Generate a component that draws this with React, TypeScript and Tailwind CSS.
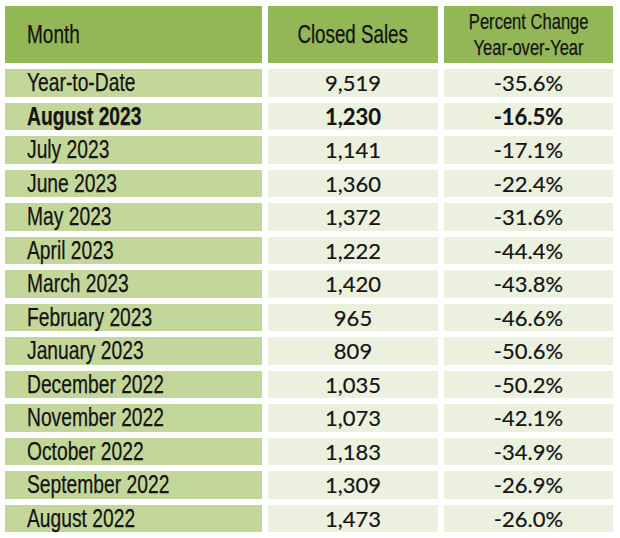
import React from "react";

const rows: [string, string, string, boolean?][] = [
  ["Year-to-Date", "9,519", "-35.6%"],
  ["August 2023", "1,230", "-16.5%", true],
  ["July 2023", "1,141", "-17.1%"],
  ["June 2023", "1,360", "-22.4%"],
  ["May 2023", "1,372", "-31.6%"],
  ["April 2023", "1,222", "-44.4%"],
  ["March 2023", "1,420", "-43.8%"],
  ["February 2023", "965", "-46.6%"],
  ["January 2023", "809", "-50.6%"],
  ["December 2022", "1,035", "-50.2%"],
  ["November 2022", "1,073", "-42.1%"],
  ["October 2022", "1,183", "-34.9%"],
  ["September 2022", "1,309", "-26.9%"],
  ["August 2022", "1,473", "-26.0%"],
];

const sans = "font-['Liberation_Sans','Arial',sans-serif] [-webkit-text-stroke:0.25px_#141414]";
const num = "font-['Lato','Carlito','Calibri',sans-serif] [-webkit-text-stroke:0.2px_#141414]";

export default function App() {
  return (
    <div className="w-[620px] h-[538px] bg-white pt-[6px] pl-[5px]">
      <div className="grid grid-cols-[257px_170px_169px] gap-[6px] text-[#141414]">
        <div className={`${sans} h-[57px] bg-[#93b657] flex items-center pl-[22px] text-[25px]`}>
          <span className="inline-block origin-left scale-x-[0.76] whitespace-nowrap">Month</span>
        </div>
        <div className={`${sans} h-[57px] bg-[#93b657] flex items-center justify-center text-[25px]`}>
          <span className="inline-block origin-center scale-x-[0.75] whitespace-nowrap">Closed Sales</span>
        </div>
        <div className={`${sans} h-[57px] bg-[#93b657] flex flex-col items-center justify-center text-[21.5px] leading-[26px] pt-[1px]`}>
          <span className="inline-block origin-center scale-x-[0.77] whitespace-nowrap">Percent Change</span>
          <span className="inline-block origin-center scale-x-[0.77] whitespace-nowrap">Year-over-Year</span>
        </div>
        {rows.map(([m, s, p, b]) => (
          <React.Fragment key={m}>
            <div
              className={`${sans} h-[27.5px] bg-[#c4d79b] pl-[22px] text-[25px] leading-[27.5px] ${b ? "font-bold" : ""}`}
            >
              <span className="inline-block origin-left scale-x-[0.77] whitespace-nowrap">{m}</span>
            </div>
            <div
              className={`${num} h-[27.5px] bg-[#ebf1de] text-center text-[22px] leading-[27.5px] ${b ? "font-bold" : ""}`}
            >
              {s}
            </div>
            <div
              className={`${num} h-[27.5px] bg-[#ebf1de] text-center text-[22px] leading-[27.5px] ${b ? "font-bold" : ""}`}
            >
              {p}
            </div>
          </React.Fragment>
        ))}
      </div>
    </div>
  );
}
